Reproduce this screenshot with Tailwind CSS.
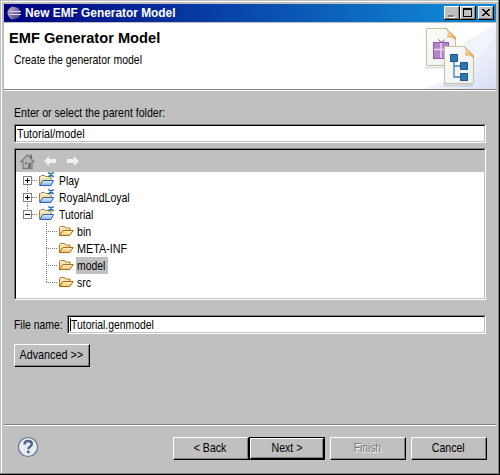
<!DOCTYPE html>
<html lang="en"><head><meta charset="utf-8"><title>New EMF Generator Model</title>
<script src="https://cdn.jsdelivr.net/npm/@tailwindcss/browser@4"></script></head>
<body class="w-[500px] h-[475px] overflow-hidden bg-[#c0c0c0] font-['Liberation_Sans',Arial,sans-serif] text-[13px] leading-[17px] text-black whitespace-nowrap">
<svg class="absolute w-0 h-0">
  <defs>
    <linearGradient id="gold" x1="0" y1="0" x2="0" y2="1"><stop offset="0" stop-color="#fff6d0"/><stop offset="1" stop-color="#f5c263"/></linearGradient>
    <linearGradient id="blue" x1="0" y1="0" x2="0" y2="1"><stop offset="0" stop-color="#e4f1ff"/><stop offset="1" stop-color="#7fb0ea"/></linearGradient>
    <linearGradient id="paper" x1="0" y1="0" x2="1" y2="1"><stop offset="0" stop-color="#fdfdfb"/><stop offset="1" stop-color="#e9efee"/></linearGradient>
    <linearGradient id="fold" x1="0" y1="0" x2="1" y2="1"><stop offset="0" stop-color="#fff0d0"/><stop offset="1" stop-color="#e39a3c"/></linearGradient>
  </defs>
  <symbol id="folder" viewBox="0 0 16 16">
    <path d="M1.500 12.500V4.500l1-1h4l1 1.500h4.500v3" fill="url(#gold)" stroke="#b07a2c"/>
    <path d="M1.500 12.500L5 7.500h10.200l-3.500 5z" fill="url(#gold)" stroke="#a86a1e"/>
  </symbol>
  <symbol id="project" viewBox="0 0 17 17">
    <path d="M1.500 13V4.500h1l1-1h3l1 1H13v4" fill="url(#gold)" stroke="#8a8562"/>
    <path d="M1.800 13.500L5 8.500h10.500l-2.500 5z" fill="url(#blue)" stroke="#2f62b5"/>
    <path d="M10.500 .300q.500 1.500 2.500 1.500t2.500-1.500M10.500 5.300q.500-1.800 2.500-1.800t2.500 1.800" fill="none" stroke="#1d6ea6" stroke-width="1.400"/>
  </symbol>
</svg>
<div class="w-[500px] h-[475px] border-r border-b border-black">
<div class="w-[499px] h-[474px] border-r border-b border-[#808080] pl-px pt-px">
<div class="w-[497px] h-[472px] border-l border-t border-white pl-[2px] pt-[2px] flex flex-col">
  <header class="w-[492px] h-[18px] shrink-0 flex items-center bg-linear-to-r/srgb from-[#000080] to-[#1084d0] to-90% text-white">
    <svg class="ml-[2px] w-4 h-4 shrink-0" viewBox="0 0 16 16"><defs><linearGradient id="orb" x1="0" y1="0" x2="1" y2="1"><stop offset="0" stop-color="#c9a5c6"/><stop offset=".5" stop-color="#7d72a6"/><stop offset="1" stop-color="#3a3380"/></linearGradient></defs><path d="M8 1.500a6.500 6.500 0 1 0 0 13C4.500 12 4.500 4 8 1.500z" fill="#bfa5c7"/><circle cx="8.500" cy="8" r="6" fill="url(#orb)"/><path d="M4 6.500h11M3.500 9.500h11.500" stroke="#d9dcf3"/></svg>
    <b class="ml-[3px] inline-block text-[12.5px] origin-left scale-x-[.95]">New EMF Generator Model</b>
    <div class="ml-auto mr-[2px] flex">
      <svg class="w-4 h-[14px]" viewBox="0 0 16 14" shape-rendering="crispEdges"><path d="M0 0h16v14H0z"/><path fill="#fff" d="M0 0h15v13H0z"/><path fill="#808080" d="M1 1h14v12H1z"/><path fill="#c0c0c0" d="M1 1h13v11H1z"/><path d="M5 10h6v2H5z" fill="#fff"/><path d="M4 9h6v2H4z" fill="#808080"/></svg>
      <svg class="w-4 h-[14px]" viewBox="0 0 16 14" shape-rendering="crispEdges"><path d="M0 0h16v14H0z"/><path fill="#fff" d="M0 0h15v13H0z"/><path fill="#808080" d="M1 1h14v12H1z"/><path fill="#c0c0c0" d="M1 1h13v11H1z"/><path fill-rule="evenodd" d="M3 2h9v9H3zM4 4v6h7V4z"/></svg>
      <svg class="ml-[2px] w-4 h-[14px]" viewBox="0 0 16 14" shape-rendering="crispEdges"><path d="M0 0h16v14H0z"/><path fill="#fff" d="M0 0h15v13H0z"/><path fill="#808080" d="M1 1h14v12H1z"/><path fill="#c0c0c0" d="M1 1h13v11H1z"/><path d="M4 3h2v1h1v1h2V4h1V3h2v1h-1v1h-1v1H9v1h1v1h1v1h1v1h-2V9H9V8H7v1H6v1H4V9h1V8h1V7h1V6H6V5H5V4H4z"/></svg>
    </div>
  </header>
  <section class="mt-px w-[492px] h-[66px] shrink-0 bg-white flex justify-between">
    <div class="pt-[7px]">
      <h1 class="ml-[5px] text-[14px] leading-[17px] font-bold origin-left scale-x-[1.045]">EMF Generator Model</h1>
      <p class="ml-[10px] mt-[4px] origin-left scale-x-[.805]">Create the generator model</p>
    </div>
    <svg class="w-[74px] h-[66px]" viewBox="0 1 74 66">
      <defs><linearGradient id="sky" x1="0" y1="0" x2="1" y2="1"><stop offset=".3" stop-color="#fff"/><stop offset="1" stop-color="#d5def5"/></linearGradient></defs>
      <path d="M0 67Q60 50 74 8V67z" fill="url(#sky)"/><path d="M42 20Q62 10 74 2V24Q60 32 48 60z" fill="#e6ecfa" opacity=".6"/>
      <path d="M3 44.500h24v2H3zM21 62.500h30v2H21z" fill="#8d93a0" opacity=".3"/>
      <path d="M4.500 6.500h20l9 9v28h-29z" fill="url(#paper)" stroke="#c5c09d"/><path d="M24.500 6.500q3 4 1 9 4-2 8 2v-2z" fill="url(#fold)" stroke="#e0a65c" stroke-width=".7"/>
      <path d="M11 20h16v17H11z" fill="#b184c6"/><path d="M19 20v17M11 27.500h16" stroke="#ead6f1" stroke-width="1.500"/><path d="M11.500 20.500h15v16h-15zM19 20l-3-2.500M20 20l3-2.500" fill="none" stroke="#9355ae"/>
      <path d="M22.500 24.500h20l9 9v28h-29z" fill="url(#paper)" stroke="#c5c09d"/><path d="M42.500 24.500q3 4 1 9 4-2 8 2v-2z" fill="url(#fold)" stroke="#e0a65c" stroke-width=".7"/>
      <path d="M32 39v16h8M32 44h8" fill="none" stroke="#3f7eae" stroke-width="1.300"/><path d="M28.500 32.500h7v7h-7zM38.500 40.500h7v7h-7zM38.500 51.500h7v7h-7z" fill="#2f76ad" stroke="#1b578c"/>
    </svg>
  </section>
  <div class="w-[492px] h-[2px] shrink-0 border-t border-b border-t-[#808080] border-b-white"></div>
  <main class="pl-[10px] pt-[13px] h-[333px] shrink-0 w-[482px]">
    <label class="block w-fit origin-left scale-x-[.814]">Enter or select the parent folder:</label>
    <div class="mt-[3px] w-[472px] h-[19px] border border-t-[#808080] border-l-[#808080] border-r-white border-b-white"><div class="h-[17px] bg-white border border-t-black border-l-black border-r-[#c0c0c0] border-b-[#c0c0c0] pl-px leading-[16px]"><span class="inline-block origin-left scale-x-[.825]">Tutorial/model</span></div></div>
    <div class="mt-[5px] w-[472px] h-[152px] border border-t-[#808080] border-l-[#808080] border-r-white border-b-white"><div class="h-[150px] bg-white border border-t-black border-l-black border-r-[#c0c0c0] border-b-[#c0c0c0]">
      <div class="h-[22px] bg-[#c0c0c0] flex items-center">
        <svg class="w-[70px] h-[22px]" viewBox="0 0 70 22"><path d="M5 11.500L11.500 5l6.500 6.500h-2v7H7v-7z" fill="#b4b4b4" stroke="#808080" stroke-width="1.300"/><path d="M14 4.500h2v4.500h-2zM9 12h2v2H9zM12 13h3v6h-3z" fill="#757575"/><path d="M28 11l5-5v3h7v4h-7v3zM63 11l-5-5v3h-7v4h7v3z" fill="#f0f0e8"/></svg>
      </div>
      <div class="h-[17px] flex"><svg class="w-[22px] h-[17px] shrink-0" viewBox="0 0 22 17" shape-rendering="crispEdges"><path d="M16 8.500h6M11.500 13v4" stroke="#808080" stroke-dasharray="1 1"/><path d="M7.500 4.500h8v8h-8z" fill="#fff" stroke="#808080"/><path d="M9 8.500h5M11.500 6v5" stroke="#000"/></svg><svg class="w-[17px] h-[17px]"><use href="#project"/></svg><span class="ml-[4px] inline-block origin-left scale-x-[.8]">Play</span></div>
      <div class="h-[17px] flex"><svg class="w-[22px] h-[17px] shrink-0" viewBox="0 0 22 17" shape-rendering="crispEdges"><path d="M16 8.500h6M11.500 0v17" stroke="#808080" stroke-dasharray="1 1"/><path d="M7.500 4.500h8v8h-8z" fill="#fff" stroke="#808080"/><path d="M9 8.500h5M11.500 6v5" stroke="#000"/></svg><svg class="w-[17px] h-[17px]"><use href="#project"/></svg><span class="ml-[4px] inline-block origin-left scale-x-[.808]">RoyalAndLoyal</span></div>
      <div class="h-[17px] flex"><svg class="w-[22px] h-[17px] shrink-0" viewBox="0 0 22 17" shape-rendering="crispEdges"><path d="M16 8.500h6M11.500 0v4" stroke="#808080" stroke-dasharray="1 1"/><path d="M7.500 4.500h8v8h-8z" fill="#fff" stroke="#808080"/><path d="M9 8.500h5" stroke="#000"/></svg><svg class="w-[17px] h-[17px]"><use href="#project"/></svg><span class="ml-[4px] inline-block origin-left scale-x-[.8]">Tutorial</span></div>
      <div class="flex"><svg class="w-[42px] h-[68px] shrink-0" viewBox="0 0 42 68" shape-rendering="crispEdges"><path d="M30.500 0v60M30 8.500h12M30 25.500h12M30 42.500h12M30 59.500h12" stroke="#808080" stroke-dasharray="1 1"/></svg>
        <div>
          <div class="h-[17px] flex"><svg class="w-4 h-4"><use href="#folder"/></svg><span class="ml-[3px] inline-block origin-left scale-x-[.814]">bin</span></div>
          <div class="h-[17px] flex"><svg class="w-4 h-4"><use href="#folder"/></svg><span class="ml-[3px] inline-block origin-left scale-x-[.83]">META-INF</span></div>
          <div class="h-[17px] flex"><svg class="w-4 h-4"><use href="#folder"/></svg><span class="ml-[2px] w-[32px] h-[17px] bg-[#c0c0c0] pl-px"><span class="inline-block origin-left scale-x-[.8]">model</span></span></div>
          <div class="h-[17px] flex"><svg class="w-4 h-4"><use href="#folder"/></svg><span class="ml-[3px] inline-block origin-left scale-x-[.814]">src</span></div>
        </div>
      </div>
    </div></div>
    <div class="mt-[15px] flex h-[19px] w-[472px]">
      <label class="w-[53px] leading-[19px]"><span class="inline-block origin-left scale-x-[.8]">File name:</span></label>
      <div class="flex-1 border border-t-[#808080] border-l-[#808080] border-r-white border-b-white"><div class="h-[17px] bg-white border border-t-black border-l-black border-r-[#c0c0c0] border-b-[#c0c0c0] pl-px flex leading-[16px]"><i class="w-px h-[13px] mt-px bg-black"></i><span class="inline-block origin-left scale-x-[.8]">Tutorial.genmodel</span></div></div>
    </div>
    <div class="mt-[10px] w-[76px] h-[23px] border border-white border-r-black border-b-black"><div class="h-[21px] border-r border-b border-[#808080] flex justify-center items-center pb-[2px]"><span class="scale-x-[.83]">Advanced &gt;&gt;</span></div></div>
  </main>
  <div class="w-[492px] h-[2px] shrink-0 border-t border-b border-t-[#808080] border-b-white"></div>
  <footer class="flex w-[492px] pt-[11px] pl-[13px]">
    <svg class="w-[22px] h-[22px] -mt-px" viewBox="0 0 22 22"><circle cx="11" cy="11" r="9.500" fill="#e9edf1" stroke="#5f7594" stroke-width="1.200"/><path d="M7.500 8.500q0-3.500 3.700-3.500 3.600 0 3.600 3 0 1.800-1.800 2.800-1.700.9-1.700 2.400" fill="none" stroke="#4d6688" stroke-width="2.400"/><path d="M10 14.700h2.600v2.500H10z" fill="#4d6688"/></svg>
    <div class="ml-[134px] w-[76px] h-[23px] border border-white border-r-black border-b-black"><div class="h-[21px] border-r border-b border-[#808080] flex justify-center items-center pb-[2px]"><span class="scale-x-[.814]">&lt; Back</span></div></div>
    <div class="w-[76px] h-[23px] border border-black"><div class="h-[21px] border border-white border-r-black border-b-black"><div class="h-[19px] border-r border-b border-[#808080] flex justify-center items-center leading-[15px] pb-px"><span class="scale-x-[.814]">Next &gt;</span></div></div></div>
    <div class="ml-[5px] w-[76px] h-[23px] border border-white border-r-black border-b-black"><div class="h-[21px] border-r border-b border-[#808080] flex justify-center items-center pb-[2px] text-[#787878] text-shadow-[1px_1px_0_#fff]"><span class="scale-x-[.79]">Finish</span></div></div>
    <div class="ml-[5px] w-[76px] h-[23px] border border-white border-r-black border-b-black"><div class="h-[21px] border-r border-b border-[#808080] flex justify-center items-center pb-[2px]"><span class="scale-x-[.814]">Cancel</span></div></div>
  </footer>
</div></div></div>
</body></html>
